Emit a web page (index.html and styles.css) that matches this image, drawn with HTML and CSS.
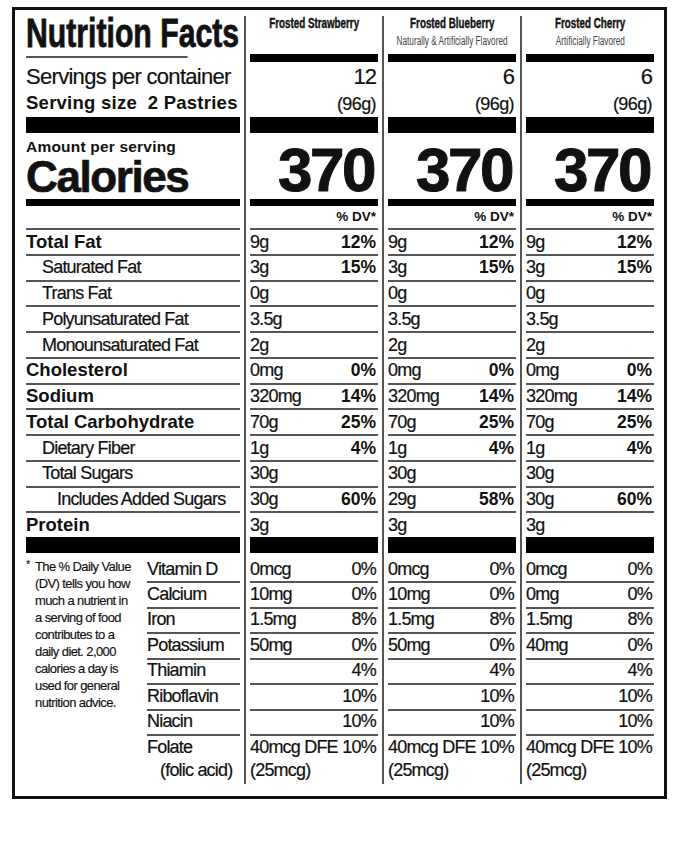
FILE: index.html
```html
<!DOCTYPE html>
<html lang="en">
<head>
<meta charset="utf-8">
<title>Nutrition Facts</title>
<link rel="stylesheet" href="styles.css">
</head>
<body>
<div class="label">
  <div class="main">
    <div class="title">Nutrition Facts</div>
    <div class="servings">
      <div class="spc">Servings per container</div>
      <div class="ss">Serving size&nbsp;&nbsp;2 Pastries</div>
    </div>
    <div class="bar thick"></div>
    <div class="cal-block">
      <div class="aps">Amount per serving</div>
      <div class="cal">Calories</div>
    </div>
    <div class="bar mid"></div>
    <div class="dv-row"></div>
    <div class="row b">Total Fat</div>
    <div class="row i1">Saturated Fat</div>
    <div class="row i1">Trans Fat</div>
    <div class="row i1">Polyunsaturated Fat</div>
    <div class="row i1">Monounsaturated Fat</div>
    <div class="row b">Cholesterol</div>
    <div class="row b">Sodium</div>
    <div class="row b">Total Carbohydrate</div>
    <div class="row i1">Dietary Fiber</div>
    <div class="row i1">Total Sugars</div>
    <div class="row i2">Includes Added Sugars</div>
    <div class="row b">Protein</div>
    <div class="bar thick"></div>
    <div class="lower">
      <div class="foot">
        <span class="star">*</span>
        <span class="foot-text">The % Daily Value<br>(DV) tells you how<br>much a nutrient in<br>a serving of food<br>contributes to a<br>daily diet. 2,000<br>calories a day is<br>used for general<br>nutrition advice.</span>
      </div>
      <div class="vit-labels">
        <div class="vrow first">Vitamin D</div>
        <div class="vrow">Calcium</div>
        <div class="vrow">Iron</div>
        <div class="vrow">Potassium</div>
        <div class="vrow">Thiamin</div>
        <div class="vrow">Riboflavin</div>
        <div class="vrow">Niacin</div>
        <div class="vrow folate">Folate<br><span class="folic">(folic acid)</span></div>
      </div>
    </div>
  </div>

  <div class="prod">
    <div class="head"><div class="pname">Frosted Strawberry</div></div>
    <div class="bar headbar"></div>
    <div class="p-serv"><div class="pcount">12</div><div class="pg">(96g)</div></div>
    <div class="bar thick"></div>
    <div class="p-cal">370</div>
    <div class="bar mid"></div>
    <div class="dv-row"><span>% DV*</span></div>
    <div class="row"><span>9g</span><span class="pct">12%</span></div>
    <div class="row"><span>3g</span><span class="pct">15%</span></div>
    <div class="row"><span>0g</span></div>
    <div class="row"><span>3.5g</span></div>
    <div class="row"><span>2g</span></div>
    <div class="row"><span>0mg</span><span class="pct">0%</span></div>
    <div class="row"><span>320mg</span><span class="pct">14%</span></div>
    <div class="row"><span>70g</span><span class="pct">25%</span></div>
    <div class="row"><span>1g</span><span class="pct">4%</span></div>
    <div class="row"><span>30g</span></div>
    <div class="row"><span>30g</span><span class="pct">60%</span></div>
    <div class="row"><span>3g</span></div>
    <div class="bar thick"></div>
    <div class="vrow first"><span>0mcg</span><span class="vp">0%</span></div>
    <div class="vrow"><span>10mg</span><span class="vp">0%</span></div>
    <div class="vrow"><span>1.5mg</span><span class="vp">8%</span></div>
    <div class="vrow"><span>50mg</span><span class="vp">0%</span></div>
    <div class="vrow"><span></span><span class="vp">4%</span></div>
    <div class="vrow"><span></span><span class="vp">10%</span></div>
    <div class="vrow"><span></span><span class="vp">10%</span></div>
    <div class="vrow folate"><div class="fline"><span>40mcg DFE</span><span class="vp">10%</span></div><div>(25mcg)</div></div>
  </div>

  <div class="prod">
    <div class="head"><div class="pname">Frosted Blueberry</div><div class="psub">Naturally &amp; Artificially Flavored</div></div>
    <div class="bar headbar"></div>
    <div class="p-serv"><div class="pcount">6</div><div class="pg">(96g)</div></div>
    <div class="bar thick"></div>
    <div class="p-cal">370</div>
    <div class="bar mid"></div>
    <div class="dv-row"><span>% DV*</span></div>
    <div class="row"><span>9g</span><span class="pct">12%</span></div>
    <div class="row"><span>3g</span><span class="pct">15%</span></div>
    <div class="row"><span>0g</span></div>
    <div class="row"><span>3.5g</span></div>
    <div class="row"><span>2g</span></div>
    <div class="row"><span>0mg</span><span class="pct">0%</span></div>
    <div class="row"><span>320mg</span><span class="pct">14%</span></div>
    <div class="row"><span>70g</span><span class="pct">25%</span></div>
    <div class="row"><span>1g</span><span class="pct">4%</span></div>
    <div class="row"><span>30g</span></div>
    <div class="row"><span>29g</span><span class="pct">58%</span></div>
    <div class="row"><span>3g</span></div>
    <div class="bar thick"></div>
    <div class="vrow first"><span>0mcg</span><span class="vp">0%</span></div>
    <div class="vrow"><span>10mg</span><span class="vp">0%</span></div>
    <div class="vrow"><span>1.5mg</span><span class="vp">8%</span></div>
    <div class="vrow"><span>50mg</span><span class="vp">0%</span></div>
    <div class="vrow"><span></span><span class="vp">4%</span></div>
    <div class="vrow"><span></span><span class="vp">10%</span></div>
    <div class="vrow"><span></span><span class="vp">10%</span></div>
    <div class="vrow folate"><div class="fline"><span>40mcg DFE</span><span class="vp">10%</span></div><div>(25mcg)</div></div>
  </div>

  <div class="prod">
    <div class="head"><div class="pname">Frosted Cherry</div><div class="psub">Artificially Flavored</div></div>
    <div class="bar headbar"></div>
    <div class="p-serv"><div class="pcount">6</div><div class="pg">(96g)</div></div>
    <div class="bar thick"></div>
    <div class="p-cal">370</div>
    <div class="bar mid"></div>
    <div class="dv-row"><span>% DV*</span></div>
    <div class="row"><span>9g</span><span class="pct">12%</span></div>
    <div class="row"><span>3g</span><span class="pct">15%</span></div>
    <div class="row"><span>0g</span></div>
    <div class="row"><span>3.5g</span></div>
    <div class="row"><span>2g</span></div>
    <div class="row"><span>0mg</span><span class="pct">0%</span></div>
    <div class="row"><span>320mg</span><span class="pct">14%</span></div>
    <div class="row"><span>70g</span><span class="pct">25%</span></div>
    <div class="row"><span>1g</span><span class="pct">4%</span></div>
    <div class="row"><span>30g</span></div>
    <div class="row"><span>30g</span><span class="pct">60%</span></div>
    <div class="row"><span>3g</span></div>
    <div class="bar thick"></div>
    <div class="vrow first"><span>0mcg</span><span class="vp">0%</span></div>
    <div class="vrow"><span>0mg</span><span class="vp">0%</span></div>
    <div class="vrow"><span>1.5mg</span><span class="vp">8%</span></div>
    <div class="vrow"><span>40mg</span><span class="vp">0%</span></div>
    <div class="vrow"><span></span><span class="vp">4%</span></div>
    <div class="vrow"><span></span><span class="vp">10%</span></div>
    <div class="vrow"><span></span><span class="vp">10%</span></div>
    <div class="vrow folate"><div class="fline"><span>40mcg DFE</span><span class="vp">10%</span></div><div>(25mcg)</div></div>
  </div>
</div>
</body>
</html>
```

FILE: styles.css
```css
* { box-sizing: border-box; margin: 0; padding: 0; }

body {
  background: #fff;
  color: #111;
  font-family: "Liberation Sans", Arial, sans-serif;
}

.label {
  margin: 7px 0 0 12px;
  width: 655px;
  height: 792px;
  border: 3px solid #111;
  padding: 6px 10px 12px 11px;
  display: flex;
}

.main { width: 214px; flex: none; }

.prod {
  width: 134px;
  flex: none;
  margin-left: 4px;
  border-left: 2px solid #555;
  padding-left: 4px;
}

.bar { background: #000; }
.thick { height: 16px; }
.mid { height: 7px; }
.headbar { height: 8px; }

/* ---- header ---- */
.title {
  height: 42px;
  border-bottom: 2px solid #555;
  font-weight: bold;
  font-size: 40px;
  line-height: 34px;
  white-space: nowrap;
  transform: scaleX(0.755);
  transform-origin: left center;
  -webkit-text-stroke: 0.8px #111;
}

.servings { height: 59px; padding-top: 6px; white-space: nowrap; }
.spc { font-size: 22px; line-height: 26px; letter-spacing: -0.7px; -webkit-text-stroke: 0.2px #111; }
.ss { font-weight: bold; font-size: 18.5px; line-height: 25px; letter-spacing: 0.25px; }

.head {
  height: 38px;
  display: flex;
  flex-direction: column;
  align-items: center;
  white-space: nowrap;
}
.pname {
  font-weight: bold;
  font-size: 14px;
  line-height: 15px;
  transform: scaleX(0.7);
  -webkit-text-stroke: 0.4px #111;
}
.psub {
  margin-top: 4px;
  font-size: 12px;
  line-height: 13px;
  color: #444;
  transform: scaleX(0.685);
}

.p-serv { height: 55px; padding-top: 2px; text-align: right; padding-right: 2px; }
.pcount { font-size: 22px; line-height: 26px; letter-spacing: -1px; -webkit-text-stroke: 0.2px #111; }
.pg {
  margin-top: 1.5px;
  font-size: 18px;
  line-height: 24px;
  letter-spacing: -0.6px;
  -webkit-text-stroke: 0.2px #111;
}

/* ---- calories ---- */
.cal-block { height: 66px; padding-top: 5px; white-space: nowrap; }
.aps { font-weight: bold; font-size: 15.5px; line-height: 17.5px; letter-spacing: 0.2px; }
.cal {
  font-weight: bold;
  font-size: 44px;
  line-height: 42px;
  letter-spacing: -1.4px;
  -webkit-text-stroke: 0.7px #111;
}

.p-cal {
  height: 66px;
  padding-top: 7px;
  padding-right: 4px;
  text-align: right;
  font-weight: bold;
  font-size: 62px;
  line-height: 60px;
  letter-spacing: -2.5px;
  -webkit-text-stroke: 1px #111;
}

.dv-row {
  height: 22px;
  padding-top: 3px;
  padding-right: 2px;
  text-align: right;
  font-weight: bold;
  font-size: 13.5px;
  line-height: 16px;
}

/* ---- nutrient rows ---- */
.row {
  height: 25.75px;
  border-top: 2px solid #555;
  padding-top: 1.5px;
  display: flex;
  justify-content: space-between;
  align-items: baseline;
  font-size: 18px;
  line-height: 20px;
  letter-spacing: -0.8px;
  white-space: nowrap;
  -webkit-text-stroke: 0.2px #111;
}
.row.b {
  font-weight: bold;
  font-size: 18.5px;
  letter-spacing: 0;
  -webkit-text-stroke: 0;
}
.row.i1 { padding-left: 16px; }
.row.i2 { padding-left: 31px; }

.pct {
  font-weight: bold;
  font-size: 17.5px;
  letter-spacing: 0;
  padding-right: 2px;
  -webkit-text-stroke: 0;
}

/* ---- vitamins ---- */
.lower { height: 231px; display: flex; }

.foot {
  width: 121px;
  flex: none;
  display: flex;
  padding-top: 5px;
  font-size: 13px;
  line-height: 17px;
  letter-spacing: -0.6px;
  white-space: nowrap;
  -webkit-text-stroke: 0.15px #111;
}
.star { width: 9px; flex: none; font-size: 11px; line-height: 13px; }

.vit-labels { width: 93px; flex: none; }

.vrow {
  height: 25.5px;
  border-top: 2px solid #555;
  padding-top: 0.5px;
  display: flex;
  justify-content: space-between;
  align-items: baseline;
  font-size: 18px;
  line-height: 20px;
  letter-spacing: -0.8px;
  white-space: nowrap;
  -webkit-text-stroke: 0.2px #111;
}
.vrow.first { height: 28px; border-top: none; padding-top: 5.5px; }
.vrow.folate {
  height: 50px;
  display: block;
  line-height: 23px;
  padding-top: 0;
}
.folate .fline { display: flex; justify-content: space-between; }
.folic { padding-left: 13px; }
.vp { padding-right: 2px; }
```
